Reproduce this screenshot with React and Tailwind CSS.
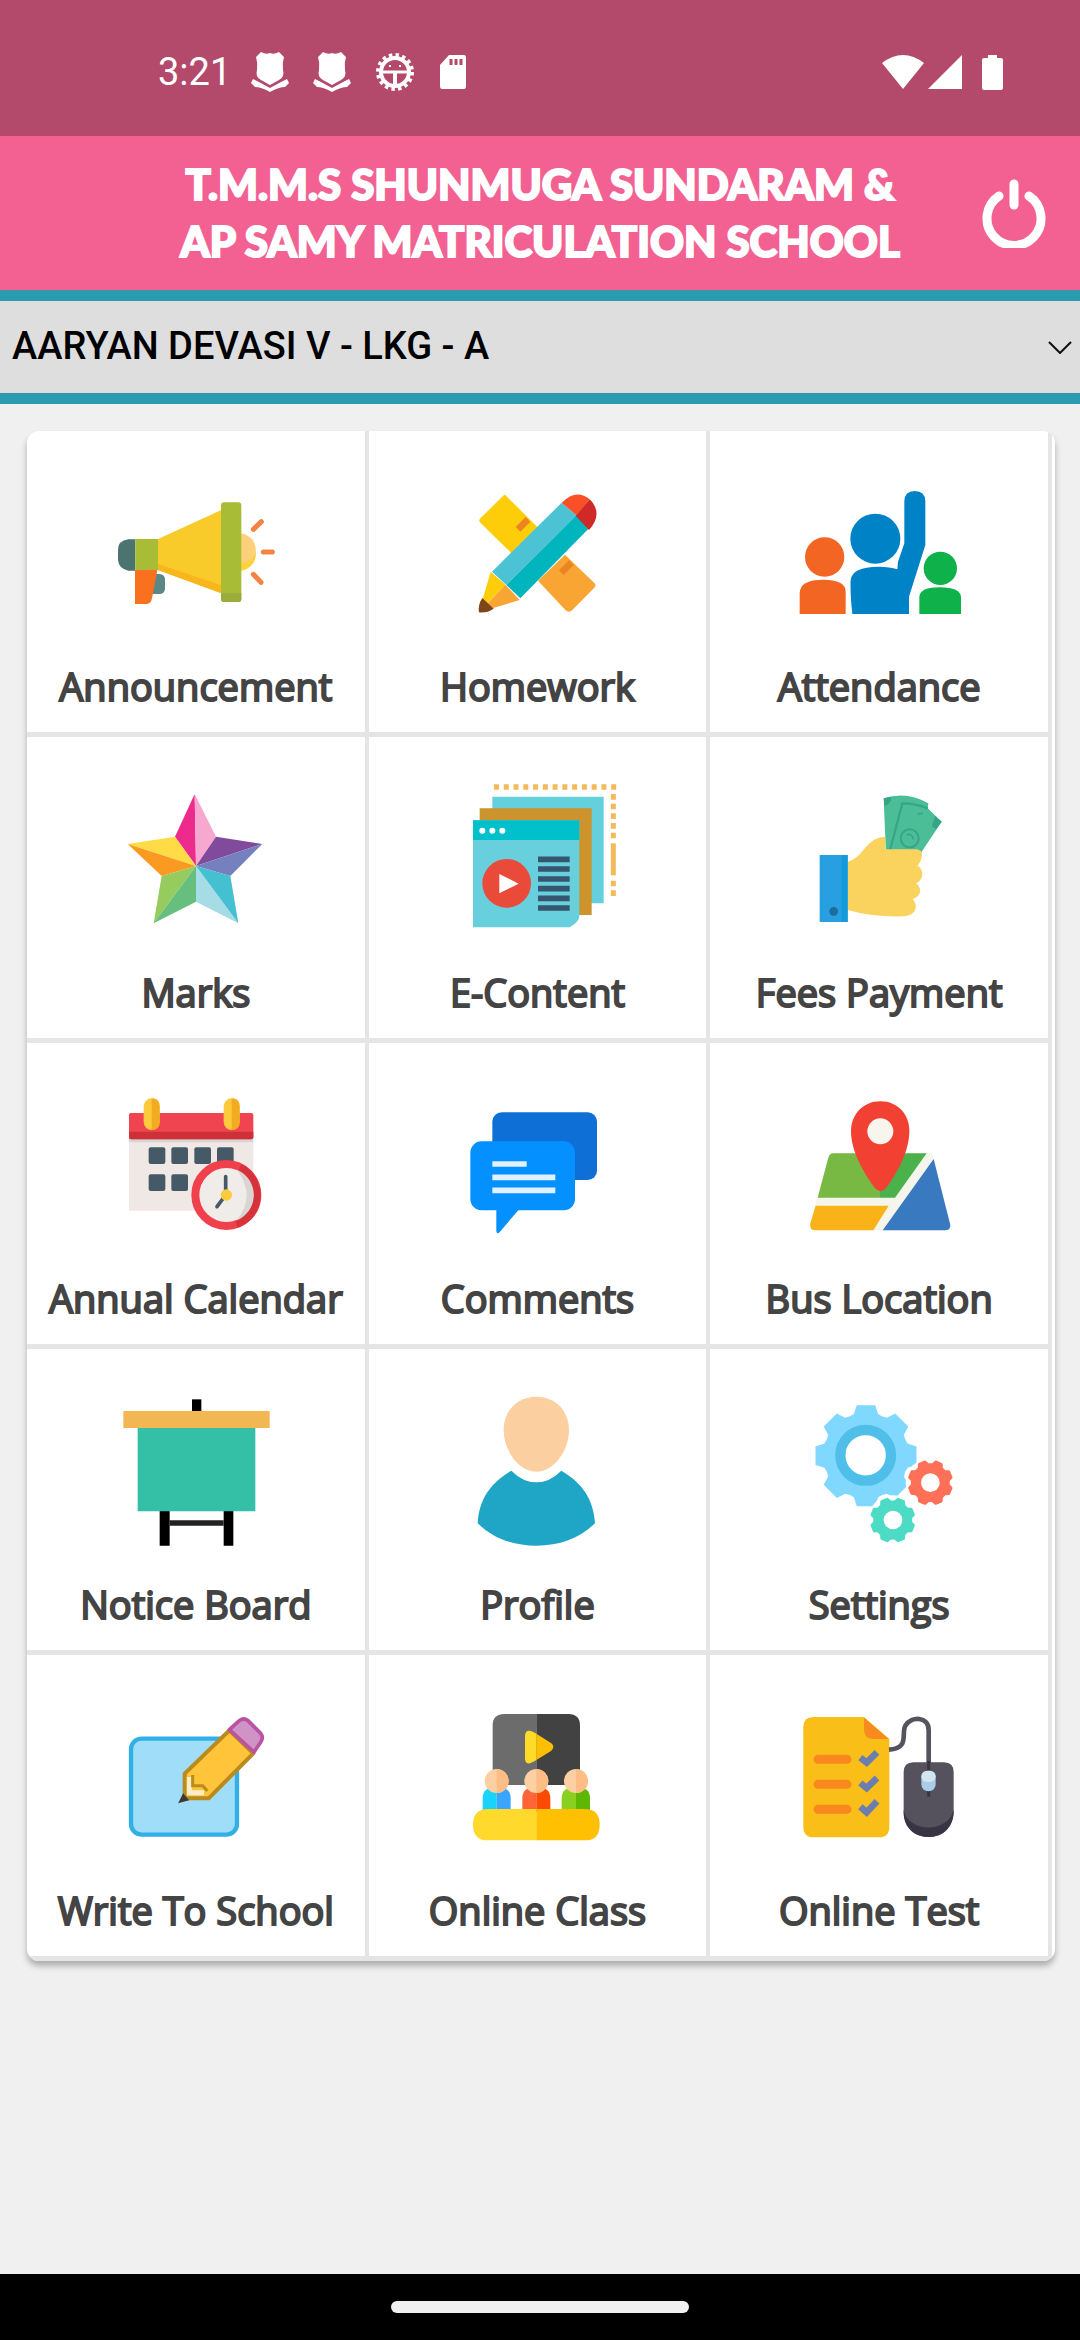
import React from "react";

function gearPath(cx, cy, outer, root, teeth, phase, topHalf, rootHalf) {
  const point = (r, a) => `${(cx + r * Math.cos(a)).toFixed(1)},${(cy + r * Math.sin(a)).toFixed(1)}`;
  const step = (Math.PI * 2) / teeth;
  let d = "";
  for (let i = 0; i < teeth; i++) {
    const a = phase + i * step;
    d += `${i === 0 ? "M" : "L"}${point(root, a - step * rootHalf)}`;
    d += `L${point(outer, a - step * topHalf)}L${point(outer, a + step * topHalf)}L${point(root, a + step * rootHalf)}`;
    d += `Q${point(root * 0.96, a + step / 2)} ${point(root, a + step * (1 - rootHalf))}`;
  }
  return d + "Z";
}

function Art({ viewBox, children }) {
  return (
    <svg viewBox={viewBox} className="size-[180px]" aria-hidden="true">
      {children}
    </svg>
  );
}

const Megaphone = () => (
  <Art viewBox="258 123 540 540">
    <rect x="385" y="462" width="50" height="60" rx="16" fill="#5b8785" />
    <path d="M346 358H325Q294 362 294 390V420Q296 446 325 452H346Z" fill="#4b7470" />
    <path d="M345 450H412L396 535Q393 552 380 552H345Z" fill="#f9701f" />
    <path d="M346 357H414V450H346Z" fill="#a9bc35" />
    <path d="M663 340Q708 350 708 396Q708 442 663 452Z" fill="#fdd07c" />
    <path d="M663 452Q708 442 708 396Q700 424 663 430Z" fill="#fdd23c" />
    <path d="M414 357L604 270V520L414 450Z" fill="#f9cb2a" />
    <path d="M414 432L604 496V520L414 450Z" fill="#f8b51c" />
    <rect x="603" y="247" width="61" height="299" rx="9" fill="#a9bc35" />
    <path d="M603 520H664V537Q664 546 655 546H612Q603 546 603 537Z" fill="#9cac3c" />
    <g stroke="#f58346" strokeWidth="15" strokeLinecap="round">
      <path d="M700 328L724 305M730 396H757M700 463L723 487" />
    </g>
  </Art>
);

const PencilRuler = () => (
  <Art viewBox="262 123 540 540">
    <path d="M438 226L546 334L466 410L362 308Q355 302 362 295L430 228Q434 223 438 226Z" fill="#fecd0a" />
    <path d="M535 482L616 404L704 489Q711 496 704 503L638 570Q628 580 618 571Z" fill="#f9a534" />
    <path d="M475 328L505 298M605 458L635 428" stroke="#ec8423" strokeWidth="20" />
    <path d="M397 455L606 248L650 286L440 495Z" fill="#4bc3d5" />
    <path d="M440 495L650 286L688 325L482 535Z" fill="#00b5bd" />
    <path d="M606 248Q650 204 690 238L650 286Z" fill="#fb4f27" />
    <path d="M690 238Q732 280 688 330L648 287Z" fill="#cf2a27" />
    <path d="M393 455L437 494L358 575Z" fill="#fecd0a" />
    <path d="M437 494L480 540L358 577Z" fill="#f9a534" />
    <path d="M368 534L402 566Q380 580 358 577Q354 555 368 534Z" fill="#7d4619" />
  </Art>
);

const RaisedHand = () => (
  <Art viewBox="267 123 540 540">
    <g fill="#f26522">
      <circle cx="374" cy="411" r="59" />
      <path d="M299 582V520Q299 479 369 479Q437 479 437 515V582Z" />
    </g>
    <g fill="#0082c6">
      <circle cx="526" cy="356" r="75" />
      <path d="M457 582Q450 520 452 480Q456 441 535 440Q570 440 592 448L594 425L613 370V243Q614 213 644 213Q675 213 676 243V375L627 530V582Z" />
    </g>
    <g fill="#0fb14b">
      <circle cx="721" cy="445" r="50" />
      <path d="M658 582V530Q660 502 720 502Q782 502 783 532V582Z" />
    </g>
  </Art>
);

const Star = () => (
  <Art viewBox="258 81 540 540">
    <path d="M524 162L465 290L528 378Z" fill="#ec2b8c" />
    <path d="M524 162L588 290L528 378Z" fill="#f7a8cf" />
    <path d="M323 312L465 290L528 378Z" fill="#ffdc45" />
    <path d="M323 312L425 408L528 378Z" fill="#fb9a20" />
    <path d="M727 312L588 290L528 378Z" fill="#824a9c" />
    <path d="M727 312L631 408L528 378Z" fill="#7580bf" />
    <path d="M401 550L425 408L528 378Z" fill="#96cc5e" />
    <path d="M401 550L528 485V378Z" fill="#67bf7e" />
    <path d="M655 550L528 485V378Z" fill="#a6dce6" />
    <path d="M655 550L631 408L528 378Z" fill="#45c0d0" />
  </Art>
);

const WebPages = () => (
  <Art viewBox="1282 81 540 540">
    <path d="M1423 141H1792" stroke="#f2ba5b" strokeWidth="17" strokeDasharray="15 14.3" />
    <path d="M1781 162V300M1781 422V472" stroke="#f2ba5b" strokeWidth="15" strokeDasharray="17 12" />
    <path d="M1781 310V406" stroke="#f2ba5b" strokeWidth="15" />
    <path d="M1418 170H1752V490H1418Z" fill="#64d0dc" />
    <path d="M1380 205H1716V525H1380Z" fill="#cd932d" />
    <path d="M1360 241H1679V528Q1679 545 1650 562H1360Z" fill="#68cfdc" />
    <path d="M1360 241H1679V300H1360Z" fill="#00c1cb" />
    <g fill="#fff">
      <circle cx="1388" cy="272" r="9" />
      <circle cx="1418" cy="272" r="9" />
      <circle cx="1448" cy="272" r="9" />
    </g>
    <circle cx="1461" cy="430" r="73" fill="#ea4a3a" />
    <path d="M1439 402V460L1497 431Z" fill="#fff" />
    <path d="M1555 358H1650M1555 387H1650M1555 417H1650M1555 446H1650M1555 475H1650M1555 504H1650" stroke="#34566e" strokeWidth="17" />
  </Art>
);

const HandMoney = () => (
  <Art viewBox="267 81 540 540">
    <path d="M551 175Q620 152 685 190L683 205L725 245L664 337L640 345H558Z" fill="#4bbd97" />
    <path d="M551 175L574 170Q576 190 554 198ZM725 245L705 228L696 258L708 268Z" fill="#35a585" />
    <path d="M683 205Q645 190 607 190L570 330" fill="none" stroke="#37a688" strokeWidth="7" />
    <circle cx="629" cy="295" r="27" fill="none" stroke="#37a688" strokeWidth="6" />
    <path d="M620 284Q636 280 640 298M652 222L668 220" fill="none" stroke="#37a688" strokeWidth="5" />
    <path d="M443 366Q470 358 492 328Q520 290 556 290V328H650Q668 330 666 348Q664 362 653 377Q667 385 667 404Q665 422 648 430Q662 440 660 456Q658 470 638 477Q650 490 647 505Q643 527 610 529Q520 532 443 510Z" fill="#fad35f" />
    <path d="M359 345H443V546H359Z" fill="#279fe0" />
    <path d="M425 345H443V546H425Z" fill="#129bdc" />
    <circle cx="401" cy="514" r="13" fill="#1d6ca0" />
  </Art>
);

const CalendarClock = () => (
  <Art viewBox="258 84 540 540">
    <path d="M327 275H700V497H327Z" fill="#efe8e5" />
    <path d="M327 283H700V292H327Z" fill="#d9d4d4" />
    <rect x="327" y="204" width="373" height="79" rx="6" fill="#f04550" />
    <path d="M327 260H700V276Q700 283 693 283H334Q327 283 327 276Z" fill="#ce3039" />
    <rect x="371" y="160" width="48" height="95" rx="24" fill="#fbcb3c" />
    <path d="M395 160Q419 160 419 184V231Q419 255 395 255Z" fill="#f3ac21" />
    <rect x="611" y="160" width="48" height="95" rx="24" fill="#fbcb3c" />
    <path d="M635 160Q659 160 659 184V231Q659 255 635 255Z" fill="#f3ac21" />
    <g fill="#455a66">
      <rect x="386" y="307" width="50" height="50" rx="6" />
      <rect x="454" y="307" width="50" height="50" rx="6" />
      <rect x="523" y="307" width="50" height="50" rx="6" />
      <rect x="591" y="307" width="50" height="50" rx="6" />
      <rect x="386" y="388" width="50" height="50" rx="6" />
      <rect x="454" y="388" width="50" height="50" rx="6" />
    </g>
    <circle cx="619" cy="450" r="93" fill="#f0ecea" stroke="#ef404b" strokeWidth="24" />
    <path d="M660 367A93 93 0 0 1 650 538" fill="none" stroke="#d5323c" strokeWidth="20" />
    <path d="M650 374A82 82 0 0 1 650 526Q710 450 650 374Z" fill="#d8d5d4" />
    <path d="M617 395V450L591 485" fill="none" stroke="#455a66" strokeWidth="11" strokeLinecap="round" />
    <circle cx="619" cy="450" r="17" fill="#fbcb3c" />
  </Art>
);

const Chat = () => (
  <Art viewBox="1282 84 540 540">
    <rect x="1418" y="202" width="314" height="203" rx="28" fill="#0e6fd6" />
    <rect x="1352" y="289" width="314" height="207" rx="34" fill="#0491ff" />
    <path d="M1430 490V558Q1432 570 1441 560L1497 494Z" fill="#0491ff" />
    <path d="M1418 357H1521M1418 397H1607M1418 436H1607" stroke="#dff0ff" strokeWidth="17" />
  </Art>
);

const MapPin = () => (
  <Art viewBox="267 84 540 540">
    <path d="M400 325H695L748 540Q750 556 735 556H345Q328 556 331 535L385 338Q389 325 400 325Z" fill="#f5f5ec" />
    <path d="M400 325H540V458H353L385 338Q389 325 400 325Z" fill="#78b943" />
    <path d="M540 325H680L585 458H540Z" fill="#4bb14a" />
    <path d="M347 482H566L520 556H345Q328 556 331 535Z" fill="#f9b218" />
    <path d="M701 342L751 540Q752 556 735 556H548Z" fill="#3979c0" />
    <path d="M541 169C595 169 628 210 628 258C628 320 590 385 560 427Q542 450 523 427C492 385 453 320 453 258C453 210 488 169 541 169Z" fill="#f24133" />
    <circle cx="541" cy="259" r="39" fill="#f8f6ec" />
  </Art>
);

const Easel = () => (
  <Art viewBox="258 87 540 540">
    <path d="M516 148H544V190H516Z" fill="#000" />
    <path d="M419 480H449V587H419ZM611 480H640V587H611Z" fill="#000" />
    <path d="M449 511H611V527H449Z" fill="#222" />
    <path d="M353 230H706V484H353Z" fill="#34bfa7" />
    <path d="M310 183H749V234H310Z" fill="#f2b752" />
  </Art>
);

const Person = () => (
  <Art viewBox="1282 87 540 540">
    <path d="M1550 140C1610 140 1648 185 1648 240C1648 300 1604 365 1550 365C1496 365 1452 300 1452 240C1452 185 1490 140 1550 140Z" fill="#fccfa0" />
    <path d="M1475 362Q1510 397 1550 397Q1590 397 1625 362C1690 400 1722 450 1726 520C1680 565 1620 587 1550 587C1480 587 1420 565 1374 520C1378 450 1410 400 1475 362Z" fill="#1fa6c7" />
  </Art>
);

const Gears = () => (
  <Art viewBox="267 87 540 540">
    <path d={gearPath(498, 317, 154, 130, 8, 0, 0.23, 0.36)} fill="#81d8ff" />
    <circle cx="497" cy="316" r="76" fill="#fff" stroke="#4fbfea" strokeWidth="31" />
    <circle cx="691" cy="398" r="74" fill="#fff" />
    <circle cx="578" cy="510" r="74" fill="#fff" />
    <path d={gearPath(691, 398, 64, 55, 8, Math.PI / 8, 0.18, 0.32)} fill="#ff7058" stroke="#ff7058" strokeWidth="9" strokeLinejoin="round" />
    <circle cx="691" cy="398" r="28" fill="#fff" />
    <path d={gearPath(578, 510, 64, 55, 8, Math.PI / 8, 0.18, 0.32)} fill="#4cdbc4" stroke="#4cdbc4" strokeWidth="9" strokeLinejoin="round" />
    <circle cx="579" cy="510" r="28" fill="#fff" />
  </Art>
);

const NotePencil = () => (
  <Art viewBox="258 90 540 540">
    <rect x="333" y="251" width="318" height="288" rx="32" fill="#a0ddf9" stroke="#31b0e8" strokeWidth="13" />
    <path d="M494 356L628 226L700 295L566 430H494Z" fill="#ffc43a" stroke="#b98a1c" strokeWidth="12" strokeLinejoin="round" />
    <path d="M628 224L658 197Q671 187 684 197L722 235Q732 247 722 262L702 291Z" fill="#cf93c6" stroke="#b953a2" strokeWidth="11" strokeLinejoin="round" />
    <path d="M508 366V413H552" fill="none" stroke="#fdeecb" strokeWidth="15" />
    <path d="M518 360V392H548L562 408" fill="none" stroke="#b98a1c" strokeWidth="9" />
    <path d="M480 440L490 420L502 434Z" fill="#3f3a33" stroke="#3f3a33" strokeWidth="6" />
  </Art>
);

const Classroom = () => (
  <Art viewBox="1282 90 540 540">
    <path d="M1550 177V390H1419V212Q1419 177 1454 177Z" fill="#6c6c6c" />
    <path d="M1550 177H1646Q1681 177 1681 212V390H1550Z" fill="#424242" />
    <path d="M1550 236V315Q1516 338 1516 310V242Q1518 216 1550 236Z" fill="#fddb28" />
    <path d="M1550 236L1594 264Q1608 275 1594 288L1550 315Z" fill="#fcc000" />
    <path d="M1389 470V430Q1389 395 1431 395V470Z" fill="#18d3fb" />
    <path d="M1431 395Q1473 395 1473 430V470H1431Z" fill="#3aa5ff" />
    <path d="M1508 470V430Q1508 395 1550 395V470Z" fill="#ff6536" />
    <path d="M1550 395Q1592 395 1592 430V470H1550Z" fill="#ff4a03" />
    <path d="M1626 470V430Q1626 395 1669 395V470Z" fill="#8ad01f" />
    <path d="M1669 395Q1711 395 1711 430V470H1669Z" fill="#5eb700" />
    <g fill="#ffcfa4">
      <circle cx="1431" cy="378" r="36" />
      <circle cx="1550" cy="378" r="36" />
      <circle cx="1669" cy="378" r="36" />
    </g>
    <path d="M1431 342A36 36 0 0 1 1431 414ZM1550 342A36 36 0 0 1 1550 414ZM1669 342A36 36 0 0 1 1669 414Z" fill="#ffbd86" />
    <path d="M1550 462V556H1405Q1360 556 1360 509Q1360 462 1405 462Z" fill="#ffd92b" />
    <path d="M1550 462H1696Q1740 462 1740 509Q1740 556 1696 556H1550Z" fill="#fec000" />
  </Art>
);

const TestMouse = () => (
  <Art viewBox="267 90 540 540">
    <path d="M340 186H492L568 252V515Q568 547 536 547H342Q310 547 310 515V217Q310 186 340 186Z" fill="#fabe18" />
    <path d="M492 188L566 252H520Q492 252 492 222Z" fill="#f98a1e" />
    <path d="M354 313H441M354 388H441M354 463H441" stroke="#f9881e" strokeWidth="27" strokeLinecap="round" />
    <path d="M481 308L500 323L531 292M481 384L500 399L531 369M481 455L500 472L531 439" fill="none" stroke="#6c7eae" strokeWidth="20" />
    <path d="M567 284C630 280 603 235 616 212C635 182 686 184 686 225V345" fill="none" stroke="#56535f" strokeWidth="14" />
    <path d="M640 322H732Q761 322 761 352V470C758 518 727 546 686 546C645 546 612 518 611 470V352Q611 322 640 322Z" fill="#55515d" />
    <path d="M611 465C625 535 745 535 761 465V475C758 520 727 546 686 546C645 546 612 520 611 475Z" fill="#383443" />
    <path d="M686 318V425" stroke="#383443" strokeWidth="9" />
    <rect x="664" y="347" width="43" height="62" rx="21" fill="#a9cde8" />
    <rect x="664" y="347" width="43" height="34" rx="17" fill="#d3e5f2" />
  </Art>
);

const MODULES = [
  ["Announcement", Megaphone],
  ["Homework", PencilRuler],
  ["Attendance", RaisedHand],
  ["Marks", Star],
  ["E-Content", WebPages],
  ["Fees Payment", HandMoney],
  ["Annual Calendar", CalendarClock],
  ["Comments", Chat],
  ["Bus Location", MapPin],
  ["Notice Board", Easel],
  ["Profile", Person],
  ["Settings", Gears],
  ["Write To School", NotePencil],
  ["Online Class", Classroom],
  ["Online Test", TestMouse],
];

const Badge = () => (
  <svg viewBox="0 0 38 40" className="h-10 w-[38px] fill-white" aria-hidden="true">
    <path d="M10 0Q15 3 19 1Q23 3 28 0L33 5Q31 11 32 18Q34 25 28 28L19 33L10 28Q4 25 6 18Q7 11 5 5Z" />
    <path d="M2 27L8 30L19 36L30 30L36 27L38 31L34 35Q28 35 19 40Q10 35 4 35L0 31Z" />
  </svg>
);

const GearFace = () => (
  <svg viewBox="0 0 40 40" className="size-10" fill="none" stroke="#fff" aria-hidden="true">
    <circle cx="20" cy="20" r="17" strokeWidth="4" strokeDasharray="3.4 3.28" />
    <circle cx="20" cy="20" r="14" strokeWidth="4" />
    <path d="M6 20H34" strokeWidth="3" />
    <path d="M20 20V34" strokeWidth="4" />
    <path d="M15 13V15M25 13V15" strokeWidth="2" />
  </svg>
);

function StatusBar() {
  return (
    <div className="flex h-[136px] items-center justify-between bg-[#b3496b] pt-2 pr-[77px] pl-[158px]">
      <div className="flex items-center gap-5">
        <span className="font-['Roboto',sans-serif] text-[38px] leading-10 text-white">3:21</span>
        <div className="flex items-center gap-6">
          <Badge />
          <Badge />
          <GearFace />
          <svg viewBox="0 0 28 36" className="h-9 w-7" aria-hidden="true">
            <path d="M10 1H25Q27 1 27 4V32Q27 35 25 35H3Q1 35 1 32V11Z" fill="#fff" />
            <path d="M12 5V11M17 5V11M22 5V11" stroke="#b3496b" strokeWidth="3" />
          </svg>
        </div>
      </div>
      <div className="flex items-center">
        <svg viewBox="0 0 42 34" className="h-[34px] w-[42px] fill-white" aria-hidden="true">
          <path d="M0 8Q21 -8 42 8L21 34Z" />
        </svg>
        <svg viewBox="0 0 34 34" className="ml-1 size-[34px] fill-white" aria-hidden="true">
          <path d="M34 0V34H0Z" />
        </svg>
        <svg viewBox="0 0 21 35" className="ml-5 h-[35px] w-[21px] fill-white" aria-hidden="true">
          <path d="M6 0H15V3H19Q21 3 21 5V33Q21 35 19 35H2Q0 35 0 33V5Q0 3 2 3H6Z" />
        </svg>
      </div>
    </div>
  );
}

export default function App() {
  return (
    <div className="flex min-h-screen flex-col bg-[#f0f0f0]">
      <StatusBar />
      <header className="grid h-[154px] grid-cols-[98px_1fr_98px] items-center bg-[#f26192]">
        <h1 className="col-start-2 text-center font-['Lato',sans-serif] text-[42px] leading-[57px] font-black whitespace-nowrap text-white [-webkit-text-stroke:2px_#fff]">
          T.M.M.S SHUNMUGA SUNDARAM &amp;
          <br />
          AP SAMY MATRICULATION SCHOOL
        </h1>
        <button type="button" aria-label="Log out" className="justify-self-start">
          <svg viewBox="0 0 64 70" className="h-[70px] w-16" fill="none" stroke="#fff" strokeWidth="9" strokeLinecap="round" aria-hidden="true">
            <path d="M32 6V27" />
            <path d="M17 18A27 27 0 1 0 47 18" />
          </svg>
        </button>
      </header>
      <div className="relative border-y-[11px] border-[#2b9cb0]">
        <select
          aria-label="Student"
          className="block h-[92px] w-full appearance-none bg-[#dedede] px-3 pb-[2px] font-['Roboto',sans-serif] text-[38px] font-medium text-black"
        >
          <option>AARYAN DEVASI V - LKG - A</option>
        </select>
        <svg viewBox="0 0 24 13" className="pointer-events-none absolute top-10 right-2 h-[13px] w-6" fill="none" stroke="#111" strokeWidth="2" aria-hidden="true">
          <path d="M1 1L12 12L23 1" />
        </svg>
      </div>
      <main className="mt-[27px] mr-[25px] ml-[27px] grid grid-cols-3 overflow-hidden rounded-xl bg-white pr-[3px] shadow-[0_5px_6px_rgba(0,0,0,0.28)]">
        {MODULES.map(([label, Icon]) => (
          <button
            key={label}
            type="button"
            className="flex h-[306px] flex-col items-center border-r-4 border-b-[5px] border-[#e5e5e5] pt-[30px]"
          >
            <Icon />
            <span className="mt-[18px] font-['Open_Sans',sans-serif] text-[38px] leading-[54px] whitespace-nowrap text-[#444] [-webkit-text-stroke:2px_#444]">
              {label}
            </span>
          </button>
        ))}
      </main>
      <nav aria-label="System" className="mt-auto flex h-[66px] items-center justify-center bg-black">
        <span className="h-3 w-[298px] rounded-full bg-[#f0f0f0]" />
      </nav>
    </div>
  );
}
